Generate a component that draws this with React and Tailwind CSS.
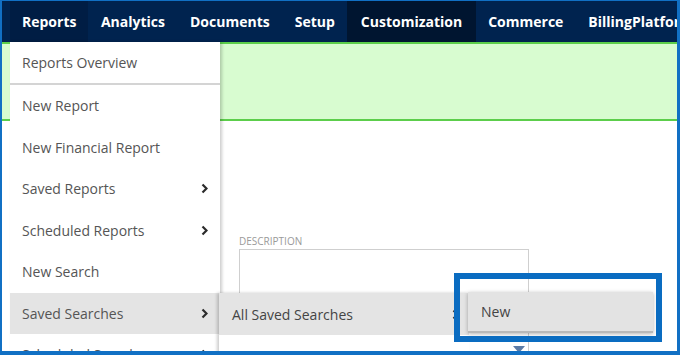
// Menú desplegable de informes sobre la barra de navegación.
const NAV = ['Reports', 'Analytics', 'Documents', 'Setup', 'Customization', 'Commerce', 'BillingPlatform'];

const MENU = [
  { label: 'New Report' },
  { label: 'New Financial Report' },
  { label: 'Saved Reports', sub: true },
  { label: 'Scheduled Reports', sub: true },
  { label: 'New Search' },
  { label: 'Saved Searches', sub: true, active: true },
  { label: 'Scheduled Searches', sub: true },
];

function Chevron({ className = '' }) {
  return (
    <svg width="7" height="11" viewBox="0 0 7 11" className={className}>
      <path d="M1.5 1.5 L5.5 5.5 L1.5 9.5" fill="none" stroke="#2b2b2b" strokeWidth="2.2" />
    </svg>
  );
}

export default function App() {
  return (
    <div className="relative h-[355px] w-[680px] overflow-hidden border-t border-b-4 border-l-2 border-r-[3px] border-[#1170c4] bg-white font-['Open_Sans',sans-serif]">
      {/* barra superior */}
      <div className="flex h-[41px] items-center bg-[#00234f] pl-[8px]">
        {NAV.map((n) => (
          <div key={n}
            className={`flex h-full items-center whitespace-nowrap text-[14px] font-bold text-white ${n === 'Reports' ? 'bg-[#001d44] px-[12px]' : n === 'Customization' ? 'bg-[#001530] px-[13.5px]' : 'px-[12.5px]'}`}>
            {n}
          </div>
        ))}
      </div>
      <div className="h-[79px] border-y-2 border-[#5cce4b] bg-[#d8fcd0]" />

      {/* formulario de fondo */}
      <div className="pl-[237px] pt-[113px]">
        <p className="text-[10px] uppercase leading-[14px] text-[#9a9a9a]">Description</p>
        <div className="mt-[1px] h-[120px] w-[290px] border border-[#cfcfcf]" />
      </div>
      <div className="absolute left-[466px] top-[339px] h-[20px] w-[60px] border-l border-[#d0d0d0]">
        <div className="absolute left-[44px] top-[6px] h-0 w-0 border-x-[6px] border-t-[7px] border-x-transparent border-t-[#5b7ba6]" />
      </div>

      {/* menú Reports */}
      <div className="absolute left-[8px] top-[41px] w-[210px] bg-white shadow-[2px_0_3px_rgba(0,0,0,0.2)]">
        <div className="flex h-[43px] items-center border-b-2 border-[#d4d4d4] pl-[12px] text-[14px] text-[#555]">Reports Overview</div>
        {MENU.map((m) => (
          <div key={m.label}
            className={`flex h-[41.5px] items-center justify-between pl-[12px] pr-[12px] text-[14px] text-[#555] ${m.active ? 'bg-[#e4e4e4]' : ''}`}>
            <span>{m.label}</span>
            {m.sub && <Chevron />}
          </div>
        ))}
      </div>

      {/* submenú Saved Searches */}
      <div className="absolute left-[217px] top-[292px] w-[250px] bg-white shadow-[-2px_0_3px_rgba(0,0,0,0.2)]">
        <div className="flex h-[42px] items-center justify-between bg-[#e4e4e4] pl-[13px] pr-[10px] text-[14px] text-[#444]">
          <span>All Saved Searches</span>
          <Chevron />
        </div>
        <div className="flex h-[42px] items-center justify-between pl-[13px] pr-[10px] text-[14px] text-[#444]">
          <span>Lori's Saved Searches</span>
          <Chevron />
        </div>
      </div>

      {/* tercer nivel */}
      <div className="absolute left-[466px] top-[291px] w-[185px] border-b-2 border-[#b9b9b9] bg-[#e3e3e3] shadow-[0_1px_4px_rgba(0,0,0,0.3)]">
        <div className="flex h-[39px] items-center pl-[13px] text-[14px] text-[#444]">New</div>
      </div>

      {/* recuadro de resalte */}
      <div className="absolute left-[452px] top-[272px] h-[69px] w-[208px] border-[6px] border-[#0a6cc1]" />
    </div>
  );
}
